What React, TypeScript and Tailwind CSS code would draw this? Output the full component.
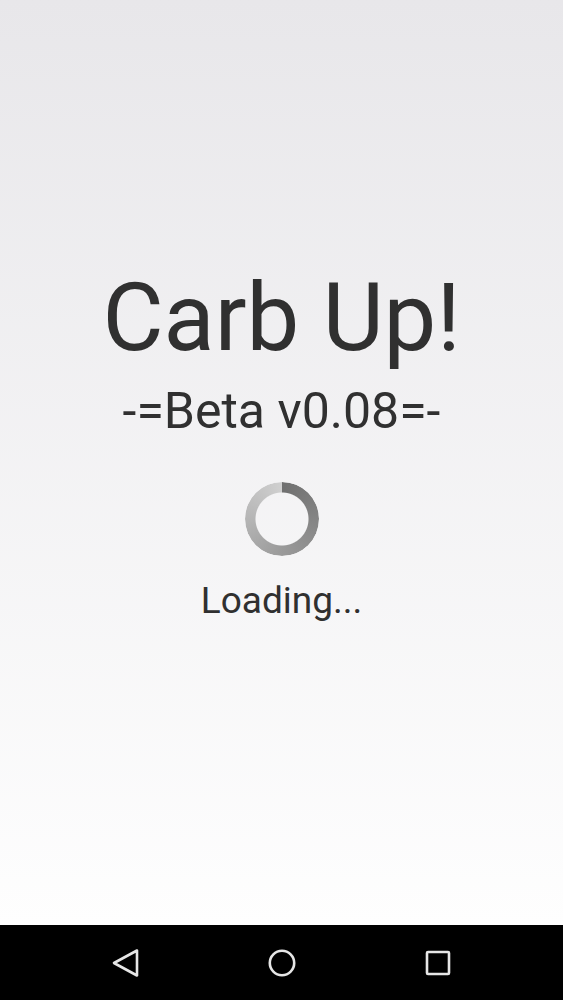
export default function App() {
    return (
        <div className="w-[563px] h-[1000px] flex flex-col font-['Roboto',sans-serif]">
            {/* Splash area */}
            <main className="h-[925px] flex flex-col items-center pt-[271px] bg-gradient-to-b from-[#e8e7ea] to-[#fefefe] text-[#303030]">
                <h1 className="text-[94px] leading-none font-normal">Carb Up!</h1>
                <div className="mt-[21px] text-[50px] leading-none">-=Beta v0.08=-</div>

                {/* Spinner */}
                <div className="mt-[46px] w-[74px] h-[74px] rounded-full bg-[conic-gradient(#6f6f6f,#9a9a9a_50%,#d0d0d0)] [mask:radial-gradient(farthest-side,transparent_calc(100%-11px),#000_calc(100%-10px))]" />

                <div className="mt-[26px] text-[37px] leading-none">Loading...</div>
            </main>

            {/* Navigation bar */}
            <nav className="h-[75px] bg-black flex items-center justify-between px-[108px]">
                <svg width="34" height="34" viewBox="0 0 34 34" fill="none" stroke="#e6e6e6" strokeWidth="2.6" strokeLinejoin="round">
                    <path d="M29 4.5 L6 17 L29 29.5 Z" />
                </svg>
                <svg width="34" height="34" viewBox="0 0 34 34" fill="none" stroke="#e6e6e6" strokeWidth="2.6">
                    <circle cx="17" cy="17" r="12.2" />
                </svg>
                <svg width="34" height="34" viewBox="0 0 34 34" fill="none" stroke="#e6e6e6" strokeWidth="2.6" strokeLinejoin="round">
                    <rect x="6" y="6" width="22" height="22" rx="1" />
                </svg>
            </nav>
        </div>
    );
}
